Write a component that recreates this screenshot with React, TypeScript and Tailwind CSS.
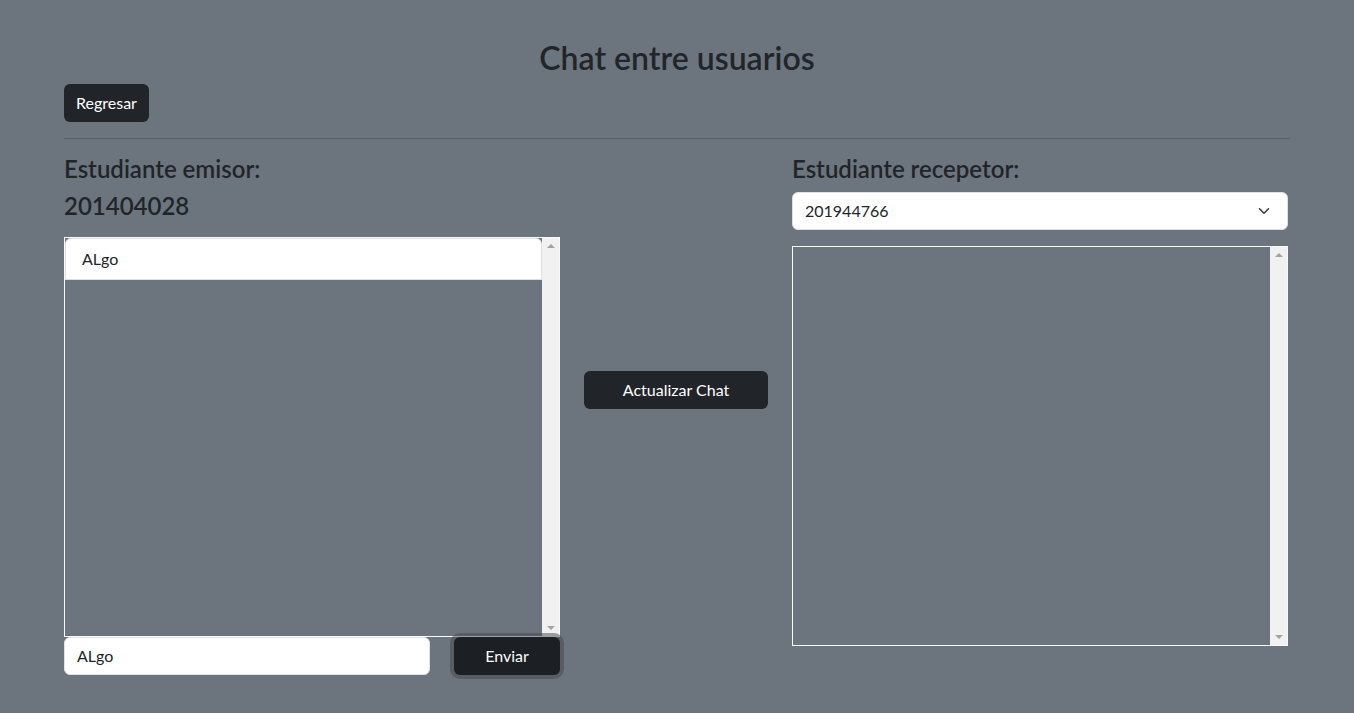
import { ChevronDown } from 'lucide-react';

const font = { fontFamily: 'Lato, "Noto Sans", sans-serif' };

function ScrollTrack() {
  return (
    <div className="flex w-[17px] shrink-0 flex-col items-center justify-between bg-[#f1f1f1] py-[6px]">
      <div className="h-0 w-0 border-x-[4px] border-b-[4px] border-x-transparent border-b-[#a3a3a3]" />
      <div className="h-0 w-0 border-x-[4px] border-t-[4px] border-x-transparent border-t-[#a3a3a3]" />
    </div>
  );
}

function ChatBox({ messages }: { messages: string[] }) {
  return (
    <div className="flex h-[400px] border border-[#f8f9fa]">
      <div className="flex flex-1 flex-col">
        {messages.map((m, i) => (
          <div
            key={i}
            className="rounded-t-[6px] border border-black/[.125] bg-white px-4 py-2 text-base leading-6 text-[#212529]"
          >
            {m}
          </div>
        ))}
      </div>
      <ScrollTrack />
    </div>
  );
}

export default function App() {
  return (
    <div className="min-h-[713px] w-full bg-[#6c757d] px-16 pt-[39px] text-[#212529]" style={font}>
      <h2 className="text-center text-[32px] font-semibold leading-[1.2]">Chat entre usuarios</h2>
      <div className="mt-[7px]">
        <button className="h-[38px] rounded-[6px] bg-[#212529] px-3 text-base text-white">Regresar</button>
      </div>
      <hr className="my-4 border-t border-[#212529]/25" />
      <div className="flex gap-6">
        <div className="w-[496px]">
          <h4 className="mb-2 text-2xl font-semibold leading-[1.2]">Estudiante emisor:</h4>
          <h4 className="mb-2 text-2xl font-semibold leading-[1.2]">201404028</h4>
          <div className="mt-4">
            <ChatBox messages={['ALgo']} />
          </div>
          <div className="flex items-center gap-6">
            <input
              readOnly
              value="ALgo"
              className="h-[38px] w-[366px] rounded-[6px] border border-[#dee2e6] bg-white px-3 text-base text-[#212529] outline-none"
              style={font}
            />
            <button className="h-[38px] w-[106px] rounded-[6px] bg-[#1c1f23] text-base text-white shadow-[0_0_0_4px_rgba(66,70,73,0.5)]">
              Enviar
            </button>
          </div>
        </div>
        <div className="w-[184px]">
          <button className="mt-[216px] h-[38px] w-full rounded-[6px] bg-[#212529] text-base text-white">
            Actualizar Chat
          </button>
        </div>
        <div className="w-[496px]">
          <h4 className="mb-2 text-2xl font-semibold leading-[1.2]">Estudiante recepetor:</h4>
          <div className="flex h-[38px] items-center justify-between rounded-[6px] border border-[#dee2e6] bg-white pl-3 pr-[14px] text-base">
            <span>201944766</span>
            <ChevronDown className="h-[18px] w-[18px] text-[#343a40]" strokeWidth={2} />
          </div>
          <div className="mt-4">
            <ChatBox messages={[]} />
          </div>
        </div>
      </div>
    </div>
  );
}
